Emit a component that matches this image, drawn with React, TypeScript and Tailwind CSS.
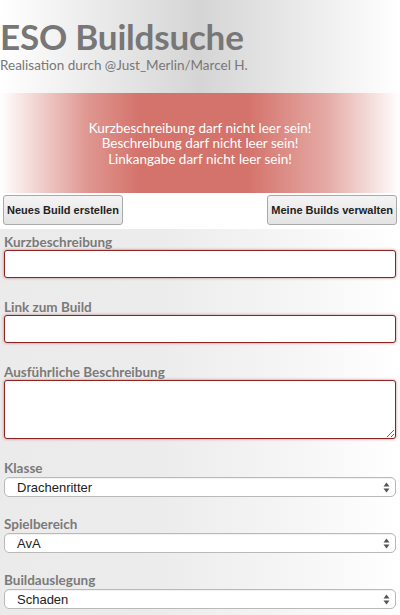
import { ReactNode } from 'react'

const label = 'block text-[13.5px] font-bold text-[#7a7a7a] leading-[16px]'
const errorInput =
  'block w-full rounded-[3px] border border-[#8e2323] bg-white shadow-[0_0_3px_rgba(150,30,30,0.55)] outline-none'

function Arrows() {
  return (
    <svg width="7" height="11" viewBox="0 0 7 11" className="shrink-0">
      <path d="M3.5 0.5 L6.5 4.5 L0.5 4.5 Z" fill="#555" />
      <path d="M3.5 10.5 L6.5 6.5 L0.5 6.5 Z" fill="#555" />
    </svg>
  )
}

function FakeSelect({ value }: { value: string }) {
  return (
    <div className="mt-[1px] flex h-[20px] items-center justify-between rounded-[5px] border border-[#b9b9b9] bg-white pl-[12px] pr-[5px] shadow-[inset_0_1px_1px_rgba(0,0,0,0.06)]">
      <span className="font-['Liberation_Sans',sans-serif] text-[13px] leading-none text-[#222]">
        {value}
      </span>
      <Arrows />
    </div>
  )
}

function Field({
  title,
  className,
  children,
}: {
  title: string
  className?: string
  children: ReactNode
}) {
  return (
    <div className={className}>
      <span className={label}>{title}</span>
      {children}
    </div>
  )
}

function GreyButton({ children }: { children: ReactNode }) {
  return (
    <button
      type="button"
      className="h-[30px] rounded-[3px] border border-[#a9a9a9] bg-gradient-to-b from-[#f4f4f4] to-[#e4e4e4] px-[3px] font-['Liberation_Sans',sans-serif] text-[11px] font-bold text-[#222]"
    >
      {children}
    </button>
  )
}

export default function App() {
  return (
    <div className="h-[615px] w-[400px] overflow-hidden bg-white font-['Lato',sans-serif]">
      <header className="h-[93px] bg-gradient-to-r from-white via-[#d5d5d5] to-white pt-[16px]">
        <h1 className="text-[35px] font-bold leading-[40px] tracking-[-0.2px] text-[#777]">
          ESO Buildsuche
        </h1>
        <p className="mt-[1px] text-[13.5px] leading-[16px] text-[#777]">
          Realisation durch @Just_Merlin/Marcel H.
        </p>
      </header>

      <div className="flex h-[100px] flex-col items-center justify-center bg-[linear-gradient(to_right,rgba(212,115,107,0)_0%,rgba(212,115,107,0.75)_22%,#d4736b_35%,#d4736b_62%,rgba(212,115,107,0.6)_82%,rgba(212,115,107,0)_100%)] pt-[2px] text-center text-[13.5px] leading-[15.5px] text-white">
        <p>Kurzbeschreibung darf nicht leer sein!</p>
        <p>Beschreibung darf nicht leer sein!</p>
        <p>Linkangabe darf nicht leer sein!</p>
      </div>

      <div className="flex justify-between bg-white px-[3px] pt-[2px] pb-[4px]">
        <GreyButton>Neues Build erstellen</GreyButton>
        <GreyButton>Meine Builds verwalten</GreyButton>
      </div>

      <form className="flex h-[400px] flex-col bg-[linear-gradient(to_right,#ebebeb_0%,#ececec_40%,#f6f6f6_75%,#ffffff_100%)] px-[4px] pt-[5px]">
        <Field title="Kurzbeschreibung">
          <input type="text" className={errorInput + ' h-[28px]'} />
        </Field>
        <Field title="Link zum Build" className="mt-[21px]">
          <input type="text" className={errorInput + ' h-[28px]'} />
        </Field>
        <Field title="Ausführliche Beschreibung" className="mt-[21px]">
          <textarea className={errorInput + ' h-[59px] resize-y'} />
        </Field>
        <Field title="Klasse" className="mt-[21px]">
          <FakeSelect value="Drachenritter" />
        </Field>
        <Field title="Spielbereich" className="mt-[19px]">
          <FakeSelect value="AvA" />
        </Field>
        <Field title="Buildauslegung" className="mt-[19px]">
          <FakeSelect value="Schaden" />
        </Field>
      </form>
    </div>
  )
}
